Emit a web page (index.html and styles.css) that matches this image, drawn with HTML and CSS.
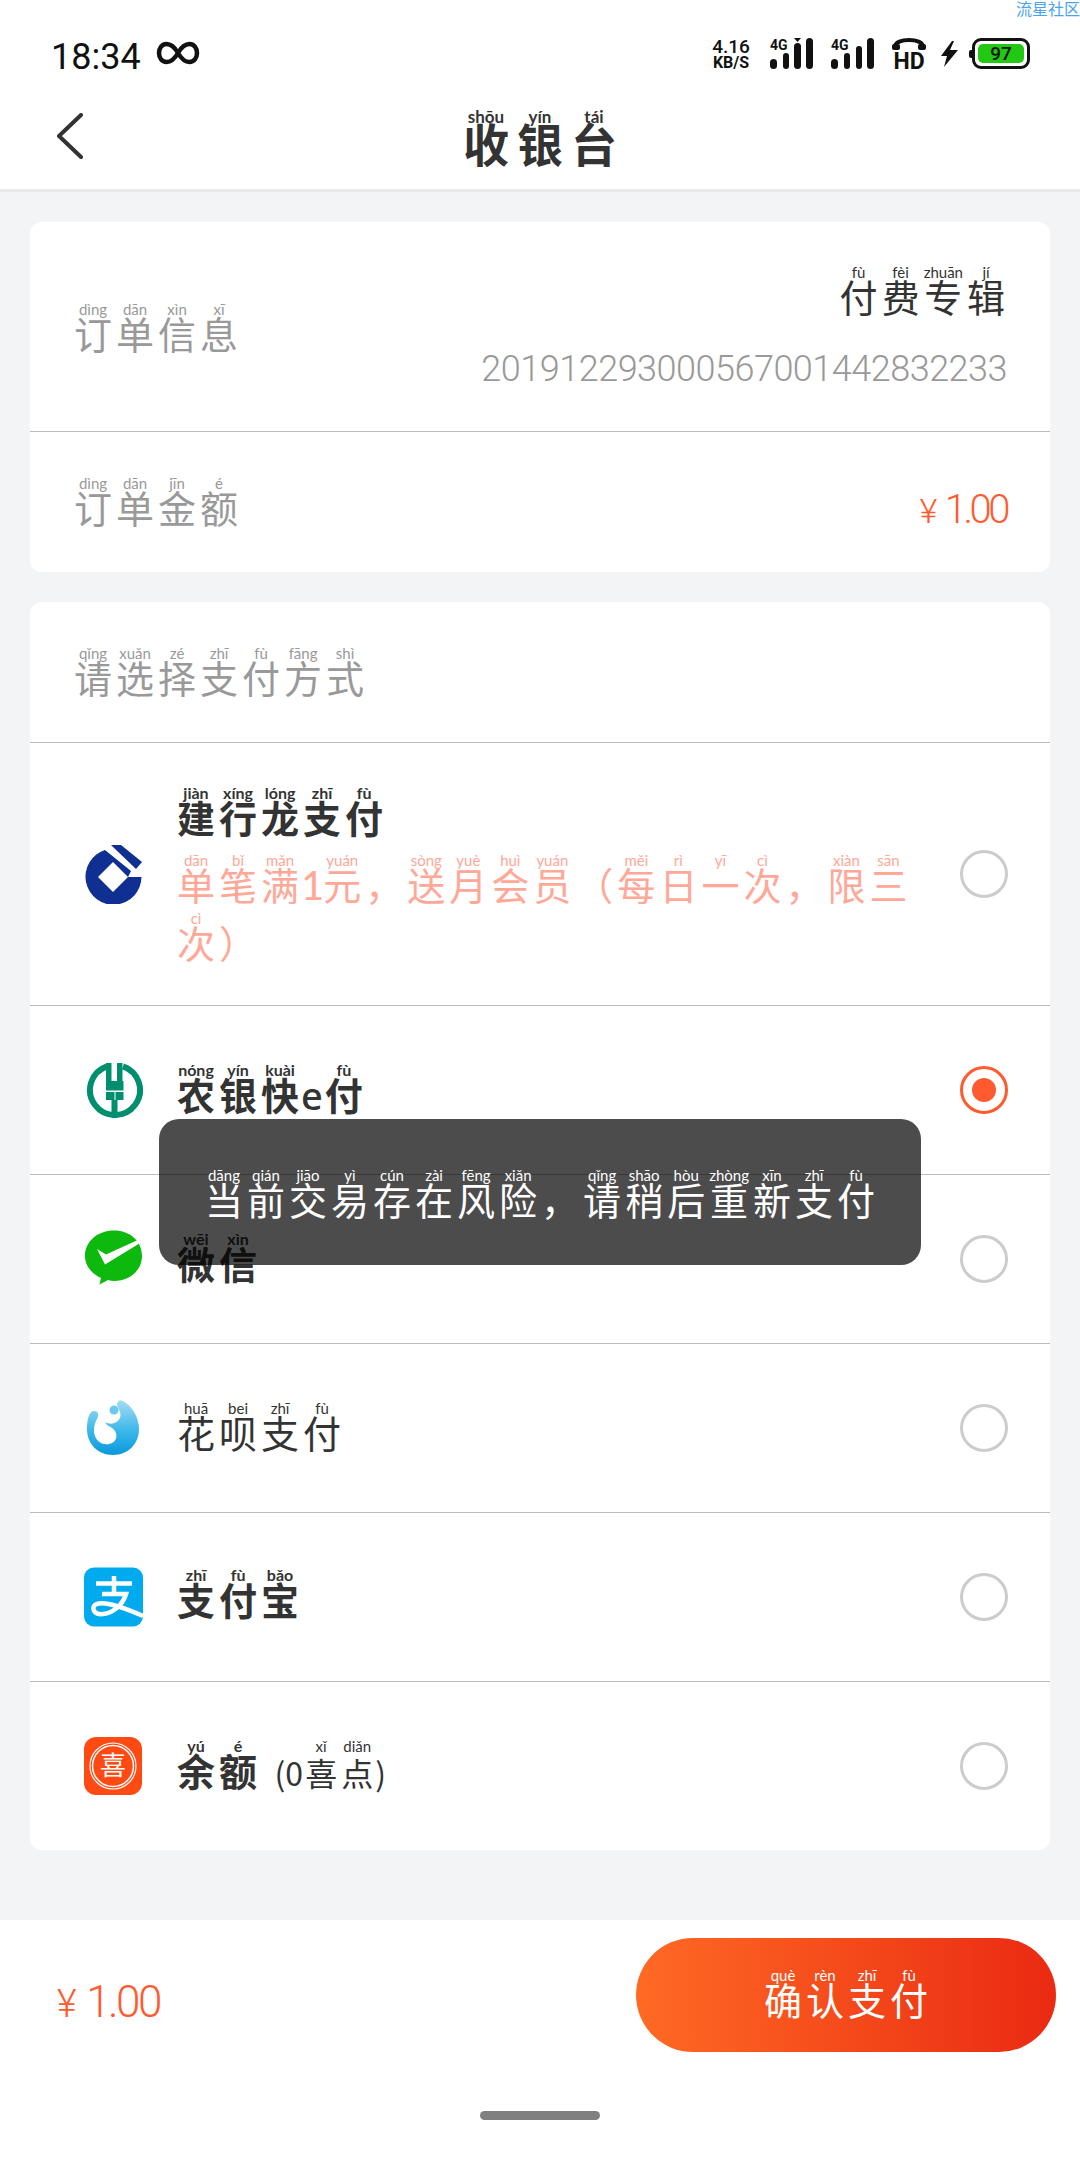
FILE: index.html
```html
<!DOCTYPE html>
<html lang="zh-CN">
<head>
    <meta charset="UTF-8">
    <meta name="viewport" content="width=device-width, initial-scale=1.0">
    <title>收银台</title>
    <link rel="stylesheet" href="styles.css">
</head>
<body>

<div class="page">
    <div class="watermark">流星社区</div>

    <div class="statusbar">
        <div class="status-left">
            <span class="clock">18:34</span>
            <svg class="infinity" width="44" height="24" viewBox="0 0 44 24"><path d="M22 12C18 5 14 3 10.500 3C6 3 3 7 3 12C3 17 6 21 10.500 21C14 21 18 19 22 12C26 5 30 3 33.500 3C38 3 41 7 41 12C41 17 38 21 33.500 21C30 21 26 19 22 12Z" fill="none" stroke="#111" stroke-width="4.500"/></svg>
        </div>
        <div class="status-right">
            <div class="netspeed"><span class="speed">4.16</span><span class="unit">KB/S</span></div>
            <svg class="signal" width="44" height="32" viewBox="0 0 44 32">
                <text x="0" y="12" class="net-label">4G</text>
                <rect x="0" y="21" width="7" height="10" rx="3.500"/>
                <rect x="13" y="15" width="6" height="16" rx="3"/>
                <rect x="24" y="5" width="7" height="26" rx="3.500"/>
                <rect x="36" y="0" width="7" height="31" rx="3.500"/>
                <path d="M24 0H31L27.500 4Z"/>
            </svg>
            <svg class="signal" width="44" height="32" viewBox="0 0 44 32">
                <text x="0" y="12" class="net-label">4G</text>
                <rect x="0" y="21" width="7" height="10" rx="3.500"/>
                <rect x="13" y="15" width="6" height="16" rx="3"/>
                <rect x="25" y="8" width="6" height="23" rx="3"/>
                <rect x="36" y="0" width="7" height="31" rx="3.500"/>
            </svg>
            <div class="hd">
                <svg width="34" height="13" viewBox="0 0 34 13"><path d="M3 11V9C3 4 10 2 17 2C24 2 31 4 31 9V11" fill="none" stroke="#111" stroke-width="4"/><rect x="0" y="6" width="8" height="6" rx="2" fill="#111"/><rect x="26" y="6" width="8" height="6" rx="2" fill="#111"/></svg>
                <span>HD</span>
            </div>
            <svg class="bolt" width="18" height="26" viewBox="0 0 18 26"><path d="M12 0L1 15H7L4 26L18 9H10L14 0Z" fill="#111"/></svg>
            <div class="battery"><span class="battery-level">97</span></div>
        </div>
    </div>

    <div class="navbar">
        <svg class="back" width="28" height="46" viewBox="0 0 28 46"><path d="M25 2L3 23L25 44" fill="none" stroke="#333" stroke-width="4" stroke-linecap="round" stroke-linejoin="round"/></svg>
        <h1 class="title"><ruby>收<rt>shōu</rt></ruby><ruby>银<rt>yín</rt></ruby><ruby>台<rt>tái</rt></ruby></h1>
    </div>

    <div class="content">
        <div class="card">
            <div class="order-row order-info">
                <div class="label"><ruby>订<rt>dìng</rt></ruby><ruby>单<rt>dān</rt></ruby><ruby>信<rt>xìn</rt></ruby><ruby>息<rt>xī</rt></ruby></div>
                <div class="order-value">
                    <div class="order-name"><ruby>付<rt>fù</rt></ruby><ruby>费<rt>fèi</rt></ruby><ruby>专<rt>zhuān</rt></ruby><ruby>辑<rt>jí</rt></ruby></div>
                    <div class="order-no">201912293000567001442832233</div>
                </div>
            </div>
            <div class="order-row order-amount">
                <div class="label"><ruby>订<rt>dìng</rt></ruby><ruby>单<rt>dān</rt></ruby><ruby>金<rt>jīn</rt></ruby><ruby>额<rt>é</rt></ruby></div>
                <div class="price price-small"><span class="yen">¥</span>1.00</div>
            </div>
        </div>

        <div class="card">
            <div class="pay-head">
                <div class="label"><ruby>请<rt>qǐng</rt></ruby><ruby>选<rt>xuǎn</rt></ruby><ruby>择<rt>zé</rt></ruby><ruby>支<rt>zhī</rt></ruby><ruby>付<rt>fù</rt></ruby><ruby>方<rt>fāng</rt></ruby><ruby>式<rt>shì</rt></ruby></div>
            </div>

            <div class="pay-row pay-row-tall">
                <svg class="pay-icon" width="60" height="60" viewBox="0 0 60 60">
                    <path d="M21 6A28 28 0 1 0 57.500 33H44L47 27Z" fill="#0f3092"/>
                    <path d="M29 33m-15 0l15-15l15 15l-15 15Z" fill="#fff"/>
                    <path d="M27 1H37L58 18L52 25Z" fill="#0f3092"/>
                </svg>
                <div class="pay-text">
                    <div class="pay-name pay-name-bold"><ruby>建<rt>jiàn</rt></ruby><ruby>行<rt>xíng</rt></ruby><ruby>龙<rt>lóng</rt></ruby><ruby>支<rt>zhī</rt></ruby><ruby>付<rt>fù</rt></ruby></div>
                    <div class="promo"><ruby>单<rt>dān</rt></ruby><ruby>笔<rt>bǐ</rt></ruby><ruby>满<rt>mǎn</rt></ruby><span class="promo-num">1</span><ruby>元<rt>yuán</rt></ruby><ruby>，<rt>&nbsp;</rt></ruby><ruby>送<rt>sòng</rt></ruby><ruby>月<rt>yuè</rt></ruby><ruby>会<rt>huì</rt></ruby><ruby>员<rt>yuán</rt></ruby><ruby>（<rt>&nbsp;</rt></ruby><ruby>每<rt>měi</rt></ruby><ruby>日<rt>rì</rt></ruby><ruby>一<rt>yī</rt></ruby><ruby>次<rt>cì</rt></ruby><ruby>，<rt>&nbsp;</rt></ruby><ruby>限<rt>xiàn</rt></ruby><ruby>三<rt>sān</rt></ruby><ruby>次<rt>cì</rt></ruby><ruby>）<rt>&nbsp;</rt></ruby></div>
                </div>
                <span class="radio"></span>
            </div>

            <div class="pay-row">
                <svg class="pay-icon" width="60" height="60" viewBox="0 0 60 60" fill="#008f6e">
                    <path d="M23 6.300A25 25 0 1 0 39 6.300" fill="none" stroke="#008f6e" stroke-width="6"/>
                    <path d="M22 3H27.500V21H33V3H38.500V21H39.500V30.500H22Z"/>
                    <path d="M22 32H30.500V40H22ZM31.500 32H39.500V40H31.500ZM27.500 40H33.500V58H27.500Z"/>
                </svg>
                <div class="pay-text">
                    <div class="pay-name pay-name-bold"><ruby>农<rt>nóng</rt></ruby><ruby>银<rt>yín</rt></ruby><ruby>快<rt>kuài</rt></ruby><span class="pay-latin">e</span><ruby>付<rt>fù</rt></ruby></div>
                </div>
                <span class="radio radio-on"></span>
            </div>

            <div class="pay-row">
                <svg class="pay-icon" width="60" height="60" viewBox="0 0 60 60">
                    <path d="M30 1.500C14 1.500 1 12 1 27C1 37 8 45 17 49L15.500 55.500L24 51C26 51.500 28 52 30 52C46 52 58 41 58 27C58 12 46 1.500 30 1.500Z" fill="#0cb90c"/>
                    <path d="M13 20L22 25.500L56 10L57 13.500L21 35.500Z" fill="#fff"/>
                </svg>
                <div class="pay-text">
                    <div class="pay-name pay-name-bold"><ruby>微<rt>wēi</rt></ruby><ruby>信<rt>xìn</rt></ruby></div>
                </div>
                <span class="radio"></span>
            </div>

            <div class="pay-row">
                <svg class="pay-icon" width="60" height="60" viewBox="0 0 60 60">
                    <defs>
                        <linearGradient id="huabeiFill" x1="0.500" y1="0" x2="0.500" y2="1">
                            <stop offset="0" stop-color="#a5dcf3"/>
                            <stop offset="0.550" stop-color="#3cb8ea"/>
                            <stop offset="1" stop-color="#0a98dc"/>
                        </linearGradient>
                    </defs>
                    <path d="M3 31C3 22 5 13 10 13C15 13 15 17 13 21C10 27 9 32 11 38C13 44 19 47 25 46C32 45 34 38 31 33C28 28 23 29 21 24C26 27 33 26 36 20C38 15 34 11 33 7C33 3 36 1 39 3C48 8 55 19 55 31C55 46 44 57 29 57C14 57 3 46 3 31Z" fill="url(#huabeiFill)"/>
                    <circle cx="30" cy="12" r="4.500" fill="#6cc8ee"/>
                </svg>
                <div class="pay-text">
                    <div class="pay-name"><ruby>花<rt>huā</rt></ruby><ruby>呗<rt>bei</rt></ruby><ruby>支<rt>zhī</rt></ruby><ruby>付<rt>fù</rt></ruby></div>
                </div>
                <span class="radio"></span>
            </div>

            <div class="pay-row">
                <svg class="pay-icon" width="60" height="60" viewBox="0 0 60 60">
                    <rect width="59" height="59" x="0" y="0.500" rx="10" fill="#00aaee"/>
                    <path d="M12 16.500H48M30 9V27M18 27H42C39 37 30 46 19 47C11 48 8 43 10 39C14 33 32 37 59 49" fill="none" stroke="#fff" stroke-width="4.500"/>
                </svg>
                <div class="pay-text">
                    <div class="pay-name pay-name-bold pay-name-up"><ruby>支<rt>zhī</rt></ruby><ruby>付<rt>fù</rt></ruby><ruby>宝<rt>bǎo</rt></ruby></div>
                </div>
                <span class="radio"></span>
            </div>

            <div class="pay-row">
                <svg class="pay-icon" width="60" height="60" viewBox="0 0 60 60">
                    <rect width="58" height="58" x="0" y="1" rx="12" fill="#ff4a14"/>
                    <circle cx="29" cy="30" r="23" fill="none" stroke="#fff" stroke-width="1.200"/>
                    <circle cx="29" cy="30" r="20.500" fill="none" stroke="#fff" stroke-width="1.500"/>
                    <text x="29" y="39" class="xi-char">喜</text>
                </svg>
                <div class="pay-text">
                    <div class="pay-name"><span class="pay-name-bold"><ruby>余<rt>yú</rt></ruby><ruby>额<rt>é</rt></ruby></span> <span class="points">(0<ruby>喜<rt>xǐ</rt></ruby><ruby>点<rt>diǎn</rt></ruby>)</span></div>
                </div>
                <span class="radio"></span>
            </div>
        </div>
    </div>

    <div class="footer">
        <div class="price price-large"><span class="yen">¥</span>1.00</div>
        <button class="confirm"><ruby>确<rt>què</rt></ruby><ruby>认<rt>rèn</rt></ruby><ruby>支<rt>zhī</rt></ruby><ruby>付<rt>fù</rt></ruby></button>
        <div class="home-bar"></div>
    </div>

    <div class="toast">
        <div class="toast-text"><ruby>当<rt>dāng</rt></ruby><ruby>前<rt>qián</rt></ruby><ruby>交<rt>jiāo</rt></ruby><ruby>易<rt>yì</rt></ruby><ruby>存<rt>cún</rt></ruby><ruby>在<rt>zài</rt></ruby><ruby>风<rt>fēng</rt></ruby><ruby>险<rt>xiǎn</rt></ruby><ruby>，<rt>&nbsp;</rt></ruby><ruby>请<rt>qǐng</rt></ruby><ruby>稍<rt>shāo</rt></ruby><ruby>后<rt>hòu</rt></ruby><ruby>重<rt>zhòng</rt></ruby><ruby>新<rt>xīn</rt></ruby><ruby>支<rt>zhī</rt></ruby><ruby>付<rt>fù</rt></ruby></div>
    </div>
</div>

</body>
</html>
```

FILE: styles.css
```css
* {
    box-sizing: border-box;
}

body {
    margin: 0;
    padding: 0;
    background-color: #f3f4f6;
    color: #333;
    font-family: "Noto Sans CJK SC", "Noto Sans", sans-serif;
}

.page {
    position: relative;
    width: 1080px;
    height: 2160px;
    display: flex;
    flex-direction: column;
    overflow: hidden;
}

ruby {
    margin: 0 2px;
    ruby-position: over;
}

rt {
    position: relative;
    top: 3px;
    font-family: "Lato", "Noto Sans", sans-serif;
    font-size: 15px;
    line-height: 13px;
    font-weight: 400;
    white-space: nowrap;
}

.watermark {
    position: absolute;
    top: 0;
    left: 1016px;
    width: 64px;
    font-size: 16px;
    line-height: 17px;
    color: #4ba3f0;
    white-space: nowrap;
}

/* status bar */
.statusbar {
    height: 96px;
    background-color: #fff;
    color: #111;
    display: flex;
    justify-content: space-between;
    align-items: flex-start;
    padding: 36px 50px 0 51px;
}

.status-left {
    display: flex;
    align-items: center;
    gap: 15px;
}

.clock {
    font-family: "Roboto", sans-serif;
    font-size: 36px;
    line-height: 42px;
}

.infinity {
    margin-top: -8px;
}

.status-right {
    display: flex;
    align-items: flex-start;
    padding-top: 2px;
}

.netspeed {
    width: 44px;
    margin-right: 17px;
    display: flex;
    flex-direction: column;
    align-items: center;
    font-family: "Roboto", sans-serif;
    font-weight: 500;
    line-height: 1;
}

.speed {
    font-size: 19px;
    line-height: 18px;
}

.unit {
    font-size: 16px;
    line-height: 14px;
    font-weight: 700;
}

.signal {
    margin-right: 17px;
    fill: #111;
}

.net-label {
    font-family: "Roboto", sans-serif;
    font-size: 14px;
    font-weight: 700;
}

.hd {
    width: 34px;
    margin-right: 14px;
    display: flex;
    flex-direction: column;
    align-items: center;
}

.hd span {
    font-family: "Roboto", sans-serif;
    font-size: 23px;
    font-weight: 700;
    line-height: 18px;
    margin-top: 2px;
}

.bolt {
    margin: 3px 14px 0 0;
}

.battery {
    position: relative;
    width: 58px;
    height: 31px;
    border: 3px solid #111;
    border-radius: 9px;
    padding: 3px 3px;
}

.battery::before {
    content: "";
    position: absolute;
    left: -6px;
    top: 9px;
    width: 4px;
    height: 8px;
    border-radius: 2px 0 0 2px;
    background-color: #111;
}

.battery-level {
    display: block;
    height: 100%;
    border-radius: 5px;
    background-color: #22c811;
    font-family: "Roboto", sans-serif;
    font-size: 19px;
    font-weight: 500;
    line-height: 20px;
    text-align: center;
}

/* nav */
.navbar {
    height: 96px;
    background-color: #fff;
    border-bottom: 3px solid #e8e9eb;
    display: grid;
    grid-template-columns: 1fr auto 1fr;
    align-items: start;
    padding: 0 56px;
}

.back {
    margin-top: 17px;
}

.title {
    margin: 0;
    font-size: 46px;
    font-weight: 700;
    line-height: 92px;
    color: #333;
    white-space: nowrap;
}

.title ruby {
    margin: 0 4px;
}

.title rt {
    top: 6px;
    font-size: 17px;
    font-weight: 700;
    line-height: 15px;
}

/* cards */
.content {
    flex: 1;
    padding: 30px 30px 0;
    display: flex;
    flex-direction: column;
    gap: 30px;
}

.card {
    background-color: #fff;
    border-radius: 12px;
    overflow: hidden;
}

.label {
    font-size: 38px;
    color: #999;
    margin: 3px 0 0 -8px;
    white-space: nowrap;
}

.order-row {
    display: flex;
    justify-content: space-between;
    align-items: center;
    padding: 0 43px 0 50px;
}

.order-info {
    height: 209px;
}

.order-info .label {
    margin-top: 5px;
}

.order-amount {
    height: 141px;
    border-top: 1px solid #bbb;
}

.order-value {
    display: flex;
    flex-direction: column;
    align-items: flex-end;
}

.order-name {
    font-size: 38px;
    color: #333;
    white-space: nowrap;
}

.order-no {
    margin-top: 24px;
    font-family: "Roboto", sans-serif;
    font-size: 36px;
    font-weight: 300;
    letter-spacing: -0.5px;
    line-height: 44px;
    color: #999;
}

.price {
    font-family: "Roboto", sans-serif;
    font-weight: 300;
    color: #ff5a30;
    white-space: nowrap;
}

.price-small {
    font-size: 40px;
    letter-spacing: -3.500px;
    line-height: 44px;
    margin-top: 16px;
}

.price-small .yen {
    font-size: 34px;
    margin-right: 11px;
}

.price-large {
    font-size: 44px;
    letter-spacing: -2.500px;
    line-height: 48px;
    margin-top: 58px;
}

.price-large .yen {
    font-size: 38px;
    margin-right: 12px;
}

/* payment list */
.pay-head {
    height: 140px;
    display: flex;
    align-items: center;
    padding-left: 50px;
}

.pay-row {
    height: 169px;
    border-top: 1px solid #bbb;
    display: flex;
    align-items: center;
    padding: 0 42px 0 54px;
}

.pay-row-tall {
    height: 263px;
}

.pay-icon {
    flex: none;
    margin-right: 33px;
}

.pay-text {
    flex: 1;
    min-width: 0;
}

.pay-name {
    font-size: 38px;
    color: #333;
    margin-left: -2px;
}

.pay-name-up {
    margin-top: -4px;
}

.pay-name-bold {
    font-weight: 700;
}

.pay-name-bold rt {
    font-size: 16px;
    font-weight: 700;
}

.pay-latin {
    font-family: "Noto Sans", sans-serif;
    font-weight: 500;
}

.points {
    font-size: 32px;
    font-weight: 400;
    margin-left: 7px;
}

.promo {
    width: 740px;
    margin: 6px 0 0 -2px;
    font-size: 38px;
    line-height: 50px;
    color: #ffa898;
}

.promo rt {
    color: #ffa898;
}

.promo-num {
    font-family: "Lato", sans-serif;
    font-size: 40px;
    letter-spacing: -3px;
}

.radio {
    flex: none;
    width: 48px;
    height: 48px;
    border: 3px solid #ccc;
    border-radius: 50%;
    display: flex;
    align-items: center;
    justify-content: center;
}

.radio-on {
    border-color: #ff5a30;
}

.radio-on::after {
    content: "";
    width: 24px;
    height: 24px;
    border-radius: 50%;
    background-color: #ff5a30;
}

.xi-char {
    font-size: 26px;
    fill: #fff;
    text-anchor: middle;
}

/* footer */
.footer {
    position: relative;
    height: 240px;
    background-color: #fff;
    display: flex;
    justify-content: space-between;
    align-items: flex-start;
    padding: 0 24px 0 57px;
}

.confirm {
    width: 420px;
    height: 114px;
    margin-top: 18px;
    padding: 2px 0 0;
    border: none;
    border-radius: 57px;
    background: linear-gradient(90deg, #ff6a24, #ea2a12);
    color: #fff;
    font-family: inherit;
    font-size: 38px;
    text-align: center;
}

.confirm rt {
    color: #fff;
}

.home-bar {
    position: absolute;
    left: 480px;
    top: 191px;
    width: 120px;
    height: 9px;
    border-radius: 5px;
    background-color: #808080;
}

/* toast */
.toast {
    position: absolute;
    left: 159px;
    top: 1119px;
    width: 762px;
    height: 146px;
    border-radius: 20px;
    background-color: rgba(0, 0, 0, 0.7);
    color: #fff;
    display: flex;
    justify-content: center;
    align-items: center;
}

.toast-text {
    margin-top: 6px;
    font-size: 38px;
    white-space: nowrap;
}

.toast rt {
    font-size: 15px;
    color: #fff;
}
```
